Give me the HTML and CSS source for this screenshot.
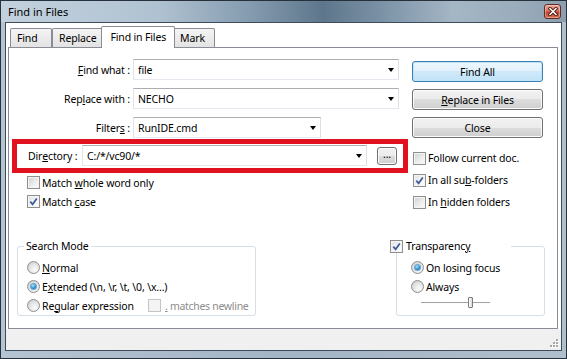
FILE: index.html
```html
<!DOCTYPE html>
<html lang="en">
<head>
    <meta charset="UTF-8">
    <meta name="viewport" content="width=device-width, initial-scale=1.0">
    <title>Find in Files</title>
    <link rel="stylesheet" href="styles.css">
</head>
<body>
    <div class="window">
        <div class="titlebar">
            <span class="title">Find in Files</span>
            <span class="close-btn">
                <svg width="10" height="9" viewBox="0 0 10 9">
                    <path d="M2 1.5 L8 7.5 M8 1.5 L2 7.5" stroke="#4a1a12" stroke-width="3.2" stroke-linecap="square"/>
                    <path d="M2 1.5 L8 7.5 M8 1.5 L2 7.5" stroke="#fff" stroke-width="1.5" stroke-linecap="square"/>
                </svg>
            </span>
        </div>

        <div class="client">
            <div class="tabs">
                <div class="tab">Find</div>
                <div class="tab">Replace</div>
                <div class="tab selected">Find in Files</div>
                <div class="tab">Mark</div>
            </div>

            <div class="panel">
                <div class="top">
                    <div class="left-col">
                        <div class="field">
                            <label class="field-label"><u>F</u>ind what :</label>
                            <div class="combo wide">file</div>
                        </div>
                        <div class="field">
                            <label class="field-label">Rep<u>l</u>ace with :</label>
                            <div class="combo wide">NECHO</div>
                        </div>
                        <div class="field">
                            <label class="field-label">Filter<u>s</u> :</label>
                            <div class="combo short">RunIDE.cmd</div>
                        </div>

                        <div class="highlight">
                            <label class="dir-label">Dir<u>e</u>ctory :</label>
                            <div class="combo dir">C:/*/vc90/*</div>
                            <div class="btn small">...</div>
                        </div>

                        <div class="check-row">
                            <span class="cb"></span>
                            <span>Match <u>w</u>hole word only</span>
                        </div>
                        <div class="check-row">
                            <span class="cb checked">
                                <svg width="9" height="9" viewBox="0 0 9 9"><path d="M1.3 4.6 L3.6 7.3 L7.8 1.4" fill="none" stroke="#3b5b98" stroke-width="1.7"/></svg>
                            </span>
                            <span>Match <u>c</u>ase</span>
                        </div>
                    </div>

                    <div class="right-col">
                        <div class="btn default">Find All</div>
                        <div class="btn"><span><u>R</u>eplace in Files</span></div>
                        <div class="btn">Close</div>

                        <div class="side-checks">
                            <div class="check-row">
                                <span class="cb"></span>
                                <span>Follow current doc.</span>
                            </div>
                            <div class="check-row">
                                <span class="cb checked">
                                    <svg width="9" height="9" viewBox="0 0 9 9"><path d="M1.3 4.6 L3.6 7.3 L7.8 1.4" fill="none" stroke="#3b5b98" stroke-width="1.7"/></svg>
                                </span>
                                <span>In all su<u>b</u>-folders</span>
                            </div>
                            <div class="check-row">
                                <span class="cb"></span>
                                <span>In <u>h</u>idden folders</span>
                            </div>
                        </div>
                    </div>
                </div>

                <div class="bottom">
                    <fieldset class="group search-mode">
                        <legend>Search Mode</legend>
                        <div class="radio-row">
                            <span class="rb"></span>
                            <span><u>N</u>ormal</span>
                        </div>
                        <div class="radio-row">
                            <span class="rb on"></span>
                            <span>E<u>x</u>tended (\n, \r, \t, \0, \x...)</span>
                        </div>
                        <div class="radio-row">
                            <span class="rb"></span>
                            <span class="regex-label">Re<u>g</u>ular expression</span>
                            <span class="cb disabled"></span>
                            <span class="muted"><u>.</u> matches newline</span>
                        </div>
                    </fieldset>

                    <fieldset class="group transparency">
                        <legend>
                            <span class="cb checked">
                                <svg width="9" height="9" viewBox="0 0 9 9"><path d="M1.3 4.6 L3.6 7.3 L7.8 1.4" fill="none" stroke="#3b5b98" stroke-width="1.7"/></svg>
                            </span>
                            <span>Transparenc<u>y</u></span>
                        </legend>
                        <div class="radio-row">
                            <span class="rb on"></span>
                            <span>On losing focus</span>
                        </div>
                        <div class="radio-row">
                            <span class="rb"></span>
                            <span>Always</span>
                        </div>
                        <div class="slider-row">
                            <div class="slider"><span class="thumb"></span></div>
                        </div>
                    </fieldset>
                </div>
            </div>

            <div class="footer">
                <svg class="grip" width="10" height="10" viewBox="0 0 10 10">
                    <g fill="#fff">
                        <rect x="8" y="2" width="2" height="2"/><rect x="5" y="5" width="2" height="2"/><rect x="8" y="5" width="2" height="2"/>
                        <rect x="2" y="8" width="2" height="2"/><rect x="5" y="8" width="2" height="2"/><rect x="8" y="8" width="2" height="2"/>
                    </g>
                    <g fill="#a7a7a7">
                        <rect x="7" y="1" width="2" height="2"/><rect x="4" y="4" width="2" height="2"/><rect x="7" y="4" width="2" height="2"/>
                        <rect x="1" y="7" width="2" height="2"/><rect x="4" y="7" width="2" height="2"/><rect x="7" y="7" width="2" height="2"/>
                    </g>
                </svg>
            </div>
        </div>
    </div>
</body>
</html>
```

FILE: styles.css
```css
* {
    box-sizing: border-box;
}

body {
    margin: 0;
    background: #fff;
    font-family: "Noto Sans", "Open Sans", sans-serif;
    font-size: 10.5px;
    letter-spacing: -0.15px;
    line-height: 14px;
    color: #000;
}

u {
    text-underline-offset: 1px;
}

/* Window frame */
.window {
    width: 567px;
    height: 359px;
    border: 1px solid #26313c;
    background: linear-gradient(90deg, #b5c4d2, #a3b4c5 50%, #b0bfcc);
    display: flex;
    flex-direction: column;
}

.titlebar {
    height: 21px;
    flex: none;
    display: flex;
    align-items: center;
    justify-content: space-between;
    padding: 0 5px 0 7px;
    background: linear-gradient(90deg, #c3d1de 0%, #b0c2d1 28%, #8299ad 45%, #5e768b 57%, #7a91a5 67%, #a5b6c5 80%, #9aacbb 92%, #8c9eae 100%);
}

.title {
    font-size: 11px;
    letter-spacing: 0;
}

.close-btn {
    width: 17px;
    height: 15px;
    border: 1px solid #5d2a24;
    border-radius: 3px;
    background: linear-gradient(#e9a898, #d8735d 45%, #c4452d 55%, #d56c50);
    box-shadow: inset 0 0 0 1px rgba(255, 255, 255, 0.35);
    display: flex;
    align-items: center;
    justify-content: center;
}

.client {
    flex: 1;
    margin: 0 4px 7px;
    border: 1px solid #3e4b58;
    background: #fff;
    display: flex;
    flex-direction: column;
}

/* Tabs */
.tabs {
    height: 24px;
    flex: none;
    display: flex;
    align-items: flex-end;
    padding-left: 4px;
}

.tab {
    height: 19px;
    min-width: 42px;
    padding: 0 6px;
    border: 1px solid #898c95;
    border-bottom: none;
    border-radius: 2px 2px 0 0;
    background: linear-gradient(#f4f4f4, #e3e3e3);
    display: flex;
    align-items: center;
}

.tab.selected {
    height: 22px;
    margin: 0 -2px -1px;
    padding: 0 8px 2px;
    background: #fff;
    position: relative;
    z-index: 1;
}

.panel {
    height: 282px;
    flex: none;
    margin: 0 3px 0 2px;
    border: 1px solid #898c95;
    background: #fff;
    display: flex;
    flex-direction: column;
}

.top {
    height: 191px;
    display: flex;
}

.left-col {
    width: 399px;
    padding-top: 11px;
}

.right-col {
    padding: 13px 0 0 4px;
}

/* Combo boxes */
.field {
    display: flex;
    align-items: center;
    height: 21px;
}

.field + .field {
    margin-top: 8px;
}

.field-label {
    width: 124px;
    padding-right: 3px;
    text-align: right;
}

.combo {
    height: 21px;
    flex: none;
    border: 1px solid #abadb3;
    border-color: #abadb3 #dbdfe6 #e3e9ef #e2e3ea;
    background: #fff;
    display: flex;
    align-items: center;
    padding-left: 4px;
}

.combo::after {
    content: "";
    margin-left: auto;
    margin-right: 4px;
    border-left: 3.5px solid transparent;
    border-right: 3.5px solid transparent;
    border-top: 4px solid #000;
}

.combo.wide {
    width: 266px;
}

.combo.short {
    width: 188px;
}

.combo.dir {
    width: 285px;
}

/* Red highlight round the directory row */
.highlight {
    width: 396px;
    height: 34px;
    margin: 1px 0 0 3px;
    border: 5px solid #e2111f;
    padding: 1px 6px 0 11px;
    display: flex;
    align-items: flex-start;
}

.dir-label {
    width: 54px;
    height: 21px;
    display: flex;
    align-items: center;
}

/* Buttons */
.btn {
    width: 131px;
    height: 21px;
    border: 1px solid #707070;
    border-radius: 3px;
    background: linear-gradient(#f2f2f2, #ebebeb 50%, #dddddd 50%, #cfcfcf);
    box-shadow: inset 0 0 0 1px #fbfbfb;
    display: flex;
    align-items: center;
    justify-content: center;
}

.btn + .btn {
    margin-top: 7px;
}

.btn.default {
    border-color: #3c7fb1;
    background: linear-gradient(#eef7fd, #e1f1fc 50%, #cfe9fa 50%, #c2e3f8);
    box-shadow: inset 0 0 0 1px #bfe3f9;
}

.btn.small {
    width: 20px;
    height: 18px;
    margin: 2px 0 0 10px;
    padding-bottom: 3px;
    align-items: flex-end;
}

/* Check boxes and radio buttons */
.check-row {
    display: flex;
    align-items: center;
    gap: 2px;
    height: 19px;
    padding-left: 18px;
}

.side-checks {
    margin-top: 9px;
}

.side-checks .check-row {
    height: 22px;
    padding-left: 1px;
}

.cb {
    width: 13px;
    height: 13px;
    flex: none;
    border: 1px solid #8e8f8f;
    background: linear-gradient(135deg, #cdd0d4, #eeeeee 60%, #fbfbfb);
    box-shadow: inset 0 0 0 1px #f4f4f4;
    display: flex;
    align-items: center;
    justify-content: center;
}

.cb.checked {
    background: linear-gradient(135deg, #dfe1e4, #f6f6f6 60%, #fdfdfd);
}

.cb.disabled {
    border-color: #c5c5c5;
    background: #f4f4f4;
    box-shadow: none;
    margin-right: 2px;
}

.muted {
    color: #8d8d8d;
    letter-spacing: -0.3px;
}

.rb {
    width: 13px;
    height: 13px;
    flex: none;
    border: 1px solid #8e8f8f;
    border-radius: 50%;
    background: radial-gradient(circle at 62% 68%, #fdfdfd 0, #e6e6e6 45%, #c6c6c6 100%);
    display: flex;
    align-items: center;
    justify-content: center;
}

.rb.on::after {
    content: "";
    width: 5px;
    height: 5px;
    border-radius: 50%;
    background: radial-gradient(circle at 40% 35%, #b8e6fb 0, #2b8dd2 55%, #0c426f 100%);
    box-shadow: 0 0 0 1px #6aa7d3;
}

/* Group boxes */
.bottom {
    display: flex;
    justify-content: space-between;
    padding: 0 12px 0 8px;
}

.group {
    margin: 0;
    padding: 5px 0 0;
    border: 1px solid #d5dfe5;
    border-radius: 3px;
}

.group legend {
    padding: 0 2px;
    margin-left: 6px;
    line-height: 14px;
}

.search-mode {
    width: 239px;
}

.search-mode .radio-row {
    padding-left: 9px;
}

.transparency {
    width: 149px;
}

.transparency legend {
    width: 121px;
    margin-left: -7px;
    padding: 0;
    display: flex;
    align-items: center;
    gap: 3px;
}

.radio-row {
    display: flex;
    align-items: center;
    gap: 2px;
    height: 19px;
    padding-left: 14px;
}

.regex-label {
    width: 104px;
}

.slider-row {
    height: 12px;
    padding-left: 24px;
    display: flex;
    align-items: center;
}

.slider {
    width: 69px;
    height: 11px;
    background: linear-gradient(transparent 5px, #a3a3a3 5px, #a3a3a3 6px, #fdfdfd 6px, #fdfdfd 7px, transparent 7px);
}

.thumb {
    display: block;
    width: 5px;
    height: 11px;
    margin-left: 47px;
    border: 1px solid #7c7c7c;
    border-radius: 1px;
    background: linear-gradient(90deg, #ffffff, #dadada);
}

/* Grey strip under the tab panel */
.footer {
    flex: 1;
    background: #f0f0f0;
    display: flex;
    justify-content: flex-end;
    align-items: flex-end;
    padding: 0 2px 2px 0;
}
```
